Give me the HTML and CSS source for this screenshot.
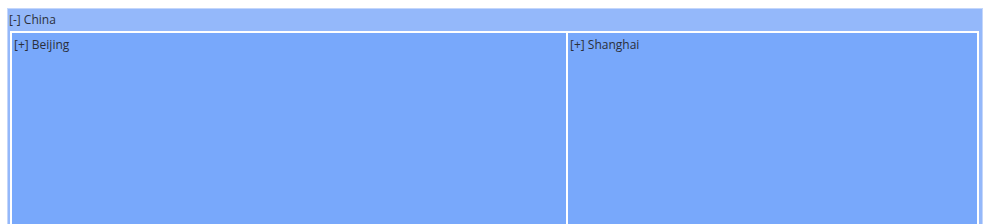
FILE: index.html
```html
<!DOCTYPE html>
<html lang="en">
<head>
    <meta charset="UTF-8">
    <title>Regions</title>
    <link rel="stylesheet" href="styles.css">
</head>
<body>
    <div class="region">
        <div class="region-title">[-] China</div>
        <div class="region-body">
            <div class="city city-wide">[+] Beijing</div>
            <div class="city">[+] Shanghai</div>
        </div>
    </div>
</body>
</html>
```

FILE: styles.css
```css
:root {
    --outer-bg: #94b8fa;
    --inner-bg: #78a8fb;
    --edge: #c3d6fb;
    --text: #2b2f3a;
}

body {
    margin: 8px 17px 0 7px;
    background: #ffffff;
    font-family: "Open Sans", "Noto Sans", sans-serif;
    font-size: 12px;
    color: var(--text);
    overflow: hidden;
}

.region {
    border: 1px solid var(--edge);
    border-bottom: 0;
    background: var(--outer-bg);
}

.region-title {
    height: 22px;
    line-height: 22px;
    padding-left: 1px;
}

.region-body {
    display: flex;
    padding: 0 3px 0 2px;
}

.city {
    flex: 1;
    height: 185px;
    border: 2px solid #ffffff;
    border-left: 0;
    border-bottom: 0;
    background: var(--inner-bg);
    padding: 3px 2px;
}

.city-wide {
    flex: 0 0 550px;
    border-left: 2px solid #ffffff;
}
```
